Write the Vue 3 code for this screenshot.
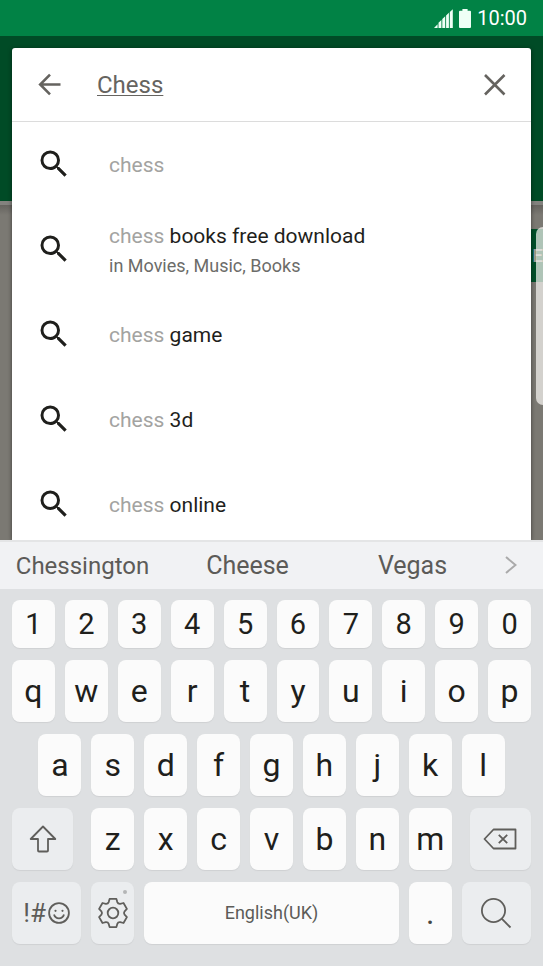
<script setup>
import { ref } from 'vue'

const query = ref('Chess')

const suggestions = [
  { match: 'chess', rest: '' },
  { match: 'chess', rest: 'books free download', note: 'in Movies, Music, Books' },
  { match: 'chess', rest: 'game' },
  { match: 'chess', rest: '3d' },
  { match: 'chess', rest: 'online' }
]

const words = ['Chessington', 'Cheese', 'Vegas']
const digits = '1234567890'.split('')
const topRow = 'qwertyuiop'.split('')
const homeRow = 'asdfghjkl'.split('')
const bottomRow = 'zxcvbnm'.split('')

function type(ch) {
  query.value += ch
}
</script>

<template>
  <div class="phone">
    <header class="status">
      <svg class="signal" viewBox="0 0 19 19" aria-hidden="true">
        <path d="M0 19L3.600 15.200V19ZM4.500 19V13.800L7.400 11V19ZM8.300 19V10L11.200 7.200V19ZM12.100 19V6.400L14.900 3.800V19ZM15.800 19V3L18.800 .2V19Z" />
      </svg>
      <svg class="battery" viewBox="0 0 12 19" aria-hidden="true">
        <path d="M3.400 0h5.200v1.800H11a1 1 0 0 1 1 1V18a1 1 0 0 1-1 1H1a1 1 0 0 1-1-1V2.800a1 1 0 0 1 1-1h2.400z" />
      </svg>
      <time class="clock">10:00</time>
    </header>

    <main class="stage">
      <div class="backdrop">
        <div class="hero"></div>
        <div class="page">
          <span class="more">E</span>
        </div>
      </div>

      <section class="card">
        <form class="search" role="search" @submit.prevent>
          <button type="button" class="plain" aria-label="Back">
            <svg class="bar-icon" viewBox="0 0 24 24" aria-hidden="true">
              <path d="M22.500 11.500H2.500M12 1.700L2.200 11.500l9.800 9.800" />
            </svg>
          </button>
          <input v-model="query" class="field" type="text" aria-label="Search" spellcheck="false" />
          <button type="button" class="plain" aria-label="Clear" @click="query = ''">
            <svg class="bar-icon" viewBox="0 0 24 24" aria-hidden="true">
              <path d="M2 2l19.500 19.500M21.500 2L2 21.500" />
            </svg>
          </button>
        </form>
        <ul class="list">
          <li v-for="(s, i) in suggestions" :key="i">
            <a href="#" class="row" @click.prevent>
              <svg class="lens" viewBox="0 0 24 24" aria-hidden="true">
                <path d="M15.500 14h-.79l-.28-.27A6.471 6.471 0 0 0 16 9.500 6.500 6.500 0 1 0 9.500 16c1.610 0 3.090-.59 4.230-1.570l.27.28v.79l5 4.990L20.490 19l-4.990-5zm-6 0C7.010 14 5 11.990 5 9.500S7.010 5 9.500 5 14 7.010 14 9.500 11.990 14 9.500 14z" />
              </svg>
              <span class="label">
                <span class="title"><span class="match">{{ s.match }}</span> {{ s.rest }}</span>
                <span v-if="s.note" class="note">{{ s.note }}</span>
              </span>
            </a>
          </li>
        </ul>
      </section>
      <div class="edge"></div>
    </main>

    <section class="keyboard" aria-label="Keyboard">
      <div class="words">
        <button
          v-for="w in words"
          :key="w"
          type="button"
          class="word"
          :class="{ long: w.length > 10 }"
          @click="query = w"
        >{{ w }}</button>
        <button type="button" class="expand" aria-label="More words">
          <svg class="chevron" viewBox="0 0 12 18" aria-hidden="true"><path d="M1 1l9.500 8L1 17" /></svg>
        </button>
      </div>

      <div class="keys">
        <div class="key-row">
          <button v-for="k in digits" :key="k" type="button" class="key digit" @click="type(k)">{{ k }}</button>
        </div>
        <div class="key-row">
          <button v-for="k in topRow" :key="k" type="button" class="key" @click="type(k)">{{ k }}</button>
        </div>
        <div class="key-row home">
          <button v-for="k in homeRow" :key="k" type="button" class="key" @click="type(k)">{{ k }}</button>
        </div>
        <div class="key-row">
          <button type="button" class="key soft wide shift" aria-label="Shift">
            <svg class="i-shift" viewBox="0 0 28 28" aria-hidden="true">
              <path d="M14 1.500L26.300 14H19v11.500q0 1-1 1h-8q-1 0-1-1V14H1.700z" />
            </svg>
          </button>
          <button v-for="k in bottomRow" :key="k" type="button" class="key" @click="type(k)">{{ k }}</button>
          <button type="button" class="key soft wide erase" aria-label="Backspace" @click="query = query.slice(0, -1)">
            <svg class="i-erase" viewBox="0 0 34 22" aria-hidden="true">
              <path d="M10.500 1.500H32.500V20.500H10.500L1.500 11zM15.800 6.800l8.400 8.400M24.200 6.800l-8.400 8.400" />
            </svg>
          </button>
        </div>
        <div class="key-row">
          <button type="button" class="key soft wide symbols">
            <span>!#</span>
            <svg class="i-smile" viewBox="0 0 22 22" aria-hidden="true">
              <circle cx="11" cy="11" r="9.900" />
              <path d="M6 12.600a5.200 5.200 0 0 0 10 0" />
              <circle class="dot" cx="7.500" cy="8.800" r="1.100" />
              <circle class="dot" cx="14.500" cy="8.800" r="1.100" />
            </svg>
          </button>
          <button type="button" class="key soft gear" aria-label="Keyboard settings">
            <svg class="i-gear" viewBox="-16 -16 32 32" aria-hidden="true">
              <path d="M-3.400-14.100H3.400L4.300-10.900Q5-9 7.200-9.200L10.500-10 13.900-4.100 11.600-1.700Q10.400 0 11.600 1.700L13.900 4.100 10.500 10 7.200 9.200Q5 9 4.300 10.900L3.400 14.100H-3.400L-4.300 10.900Q-5 9-7.200 9.200L-10.500 10-13.900 4.100-11.600 1.700Q-10.400 0-11.600-1.700L-13.900-4.100-10.500-10-7.200-9.200Q-5-9-4.300-10.900z" />
              <circle cx="0" cy="0" r="5.300" />
            </svg>
          </button>
          <button type="button" class="key space" @click="type(' ')">English(UK)</button>
          <button type="button" class="key period" @click="type('.')">.</button>
          <button type="button" class="key soft wide" aria-label="Search">
            <svg class="i-find" viewBox="0 0 32 32" aria-hidden="true">
              <circle cx="13.500" cy="13.500" r="11.600" />
              <path d="M21.700 21.700l8.800 8.800" />
            </svg>
          </button>
        </div>
      </div>
    </section>
  </div>
</template>

<style>
body {
  margin: 0;
}
</style>

<style scoped>
.phone {
  display: flex;
  flex-direction: column;
  height: 100vh;
  overflow: hidden;
  font-family: Roboto, "Liberation Sans", sans-serif;
  color: #1f1f1c;
}

button,
input {
  margin: 0;
  padding: 0;
  border: 0;
  background: none;
  font: inherit;
  color: inherit;
}

svg {
  display: block;
  flex: none;
}

.status {
  display: flex;
  flex: none;
  align-items: center;
  justify-content: flex-end;
  height: 36px;
  padding-right: 16px;
  background: #018245;
  color: #fff;
}

.status svg {
  height: 19px;
  fill: #effff6;
}

.signal {
  width: 19px;
  margin-right: 6px;
}

.battery {
  width: 12px;
  margin-right: 6px;
}

.clock {
  font-size: 20px;
  line-height: 36px;
}

.stage {
  position: relative;
  display: grid;
  grid-template: minmax(0, 1fr) / minmax(0, 1fr);
  flex: 1 1 0;
  min-height: 0;
  overflow: hidden;
}

.backdrop,
.card {
  grid-area: 1 / 1;
}

.backdrop {
  display: flex;
  flex-direction: column;
  background: #7b7973;
}

.hero {
  flex: none;
  height: 165px;
  background: #004b26;
  border-bottom: 4px solid #83827e;
}

.page {
  flex: 1;
  display: flex;
  align-items: flex-start;
  justify-content: flex-end;
  padding-top: 24px;
  background: linear-gradient(#65635e, #7b7973 10px);
}

.more {
  padding-left: 30px;
  background: #004f29;
  color: #9a9d98;
  font-size: 19px;
  font-weight: 500;
  line-height: 53px;
}

.edge {
  position: absolute;
  top: 191px;
  right: 0;
  width: 7px;
  height: 178px;
  border-radius: 7px 0 0 7px;
  background: rgba(249, 247, 244, 0.7);
}

.card {
  z-index: 1;
  margin: 12px 12px 0;
  overflow: hidden;
  border-radius: 3px 3px 0 0;
  background: #fff;
  box-shadow: 0 1px 4px rgba(0, 0, 0, 0.5);
}

.search {
  display: flex;
  align-items: center;
  height: 73px;
  padding: 0 24px 0 26px;
  border-bottom: 1px solid #dcdcdc;
}

.plain {
  display: flex;
  flex: none;
}

.bar-icon {
  width: 24px;
  height: 24px;
  fill: none;
  stroke: #65635f;
  stroke-width: 2.6;
}

.field {
  flex: 1;
  min-width: 0;
  margin-left: 35px;
  outline: 0;
  color: #666460;
  font-size: 24px;
  line-height: 32px;
  text-decoration: underline;
  text-decoration-thickness: 1px;
  text-underline-offset: 2px;
}

.list {
  margin: 0;
  padding: 0;
  list-style: none;
}

.row {
  display: flex;
  align-items: center;
  height: 85px;
  padding: 0 24px;
  color: inherit;
  text-decoration: none;
}

.lens {
  width: 36px;
  height: 36px;
  margin: 0 37px 2px 0;
  fill: #1f1f1c;
}

.label {
  display: flex;
  flex-direction: column;
  gap: 4px;
}

.title {
  font-size: 21px;
  line-height: 28px;
}

.match {
  color: #a3a3a1;
}

.note {
  color: #6c6c69;
  font-size: 18px;
  line-height: 24px;
}

.keyboard {
  flex: none;
  background: #dee0e2;
}

.words {
  display: grid;
  grid-template-columns: repeat(3, 1fr) 48px;
  align-items: center;
  height: 47px;
  border-top: 2px solid #e4e5e6;
  background: #f1f2f4;
}

.word {
  color: #5c5b58;
  font-size: 25px;
  line-height: 46px;
}

.word.long {
  font-size: 24px;
}

.expand {
  display: flex;
}

.chevron {
  width: 12px;
  height: 18px;
  margin: 0 0 2px 10px;
  fill: none;
  stroke: #aaa;
  stroke-width: 2;
}

.keys {
  display: flex;
  flex-direction: column;
  gap: 12px;
  padding: 11px 12px 22px;
}

.key-row {
  display: grid;
  grid-template-columns: repeat(20, minmax(0, 1fr));
  column-gap: 10px;
}

.key {
  display: flex;
  grid-column: span 2;
  align-items: center;
  justify-content: center;
  height: 62px;
  border-radius: 8px;
  background: #fbfbfb;
  box-shadow: 0 1px 1px #cfd1d3;
  font-size: 32px;
  line-height: 40px;
}

.digit {
  height: 48px;
  font-size: 29px;
}

.home .key:first-child {
  grid-column: 2 / span 2;
}

.soft {
  background: #ebedef;
  color: #5c5b58;
}

.wide {
  grid-column: span 3;
}

.shift {
  margin-right: 8px;
}

.erase {
  margin-left: 8px;
}

.space {
  grid-column: span 10;
  color: #5c5b58;
  font-size: 18px;
}

.period {
  color: #454541;
}

.symbols {
  gap: 2px;
  font-size: 26px;
}

.soft svg {
  fill: none;
  stroke: #5f5e5b;
  stroke-width: 1.8;
  stroke-linejoin: round;
}

.i-shift {
  width: 28px;
  height: 28px;
}

.i-erase {
  width: 34px;
  height: 22px;
}

.i-smile {
  width: 22px;
  height: 22px;
}

.i-smile .dot {
  fill: #5f5e5b;
  stroke: none;
}

.gear {
  position: relative;
}

.gear::after {
  content: "";
  position: absolute;
  top: 8px;
  right: 7px;
  width: 4px;
  height: 4px;
  border-radius: 50%;
  background: #b4b5b6;
}

.i-gear,
.i-find {
  width: 32px;
  height: 32px;
}
</style>
